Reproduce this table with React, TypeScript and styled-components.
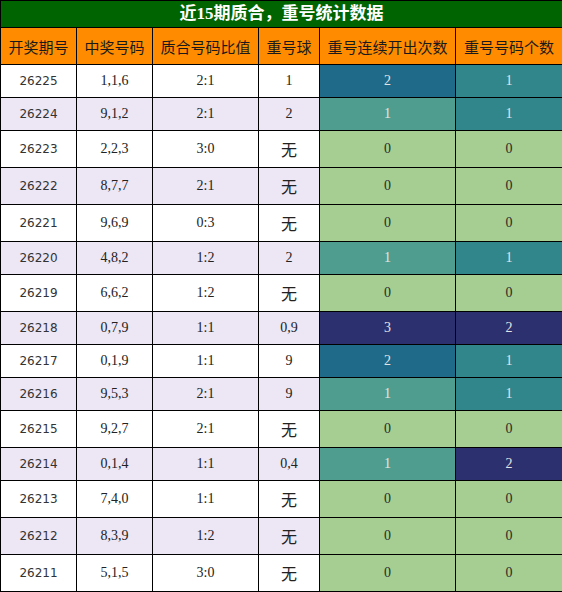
import React from 'react';
import styled, { createGlobalStyle } from 'styled-components';

type Row = [string, string, string, string, number, number];

const rows: Row[] = [
 ['26225', '1,1,6', '2:1', '1', 2, 1],
 ['26224', '9,1,2', '2:1', '2', 1, 1],
 ['26223', '2,2,3', '3:0', '无', 0, 0],
 ['26222', '8,7,7', '2:1', '无', 0, 0],
 ['26221', '9,6,9', '0:3', '无', 0, 0],
 ['26220', '4,8,2', '1:2', '2', 1, 1],
 ['26219', '6,6,2', '1:2', '无', 0, 0],
 ['26218', '0,7,9', '1:1', '0,9', 3, 2],
 ['26217', '0,1,9', '1:1', '9', 2, 1],
 ['26216', '9,5,3', '2:1', '9', 1, 1],
 ['26215', '9,2,7', '2:1', '无', 0, 0],
 ['26214', '0,1,4', '1:1', '0,4', 1, 2],
 ['26213', '7,4,0', '1:1', '无', 0, 0],
 ['26212', '8,3,9', '1:2', '无', 0, 0],
 ['26211', '5,1,5', '3:0', '无', 0, 0],
];

const streakColors: Record<number, string> = {
 0: '#a6ce92',
 1: '#4f9d8f',
 2: '#1f6a89',
 3: '#2d306e',
};

const countColors: Record<number, string> = {
 0: '#a6ce92',
 1: '#31868c',
 2: '#2d306e',
};

const headers = ['开奖期号', '中奖号码', '质合号码比值', '重号球', '重号连续开出次数', '重号号码个数'];
const widths = [76, 76, 106, 61, 136, 107];

function App() {
 return (
  <>
   <GlobalStyle />
   <Table>
    <colgroup>
     {widths.map((w, i) => (
      <col key={i} style={{ width: w }} />
     ))}
    </colgroup>
    <thead>
     <tr>
      <Title colSpan={6}>近15期质合，重号统计数据</Title>
     </tr>
     <tr>
      {headers.map((h) => (
       <HeadCell key={h}>{h}</HeadCell>
      ))}
     </tr>
    </thead>
    <tbody>
     {rows.map((r, i) => {
      const tall = r[3] === '无';
      return (
       <DataRow key={r[0]} $alt={i % 2 === 1} $tall={tall}>
        <IssueCell>{r[0]}</IssueCell>
        <Cell>{r[1]}</Cell>
        <Cell>{r[2]}</Cell>
        <RepeatCell $none={tall}>{r[3]}</RepeatCell>
        <HeatCell $bg={streakColors[r[4]]} $dark={r[4] > 0}>
         {r[4]}
        </HeatCell>
        <HeatCell $bg={countColors[r[5]]} $dark={r[5] > 0}>
         {r[5]}
        </HeatCell>
       </DataRow>
      );
     })}
    </tbody>
   </Table>
  </>
 );
}

export default App;

/* Styled Components */

const GlobalStyle = createGlobalStyle`
 html, body {
  margin: 0;
  padding: 0;
  background: #ffffff;
 }
`;

const Table = styled.table`
 width: 562px;
 table-layout: fixed;
 border-collapse: collapse;
 font-family: 'Liberation Serif', 'Noto Sans CJK SC', serif;
 color: #222;

 td, th {
  border: 1px solid #000;
  text-align: center;
  padding: 0;
 }
`;

const Title = styled.th`
 height: 26px;
 background: #006400;
 color: #fff;
 font-family: 'Liberation Serif', 'Noto Sans CJK SC', sans-serif;
 font-size: 17px;
 font-weight: bold;
 line-height: 20px;
`;

const HeadCell = styled.th`
 height: 36px;
 background: #ff8c00;
 color: #1a1a1a;
 font-family: 'Noto Sans CJK SC', sans-serif;
 font-size: 15px;
 font-weight: normal;
 white-space: nowrap;
`;

interface RowProps {
 $alt: boolean;
 $tall: boolean;
}
const DataRow = styled.tr<RowProps>`
 height: ${(p) => (p.$tall ? '37px' : '33px')};
 background: ${(p) => (p.$alt ? '#ece6f5' : '#ffffff')};
`;

const Cell = styled.td`
 font-size: 14px;
`;

const IssueCell = styled.td`
 font-family: 'DejaVu Sans', sans-serif;
 font-size: 12px;
 color: #333;
`;

const RepeatCell = styled.td<{ $none: boolean }>`
 font-family: ${(p) => (p.$none ? "'Noto Sans CJK SC', sans-serif" : "'Liberation Serif', serif")};
 font-size: ${(p) => (p.$none ? '16px' : '14px')};
 padding-top: ${(p) => (p.$none ? '4px' : '0')};
`;

const HeatCell = styled.td<{ $bg: string; $dark: boolean }>`
 background: ${(p) => p.$bg};
 color: ${(p) => (p.$dark ? '#e4e4e4' : '#2a2a2a')};
 font-size: 14px;
`;
